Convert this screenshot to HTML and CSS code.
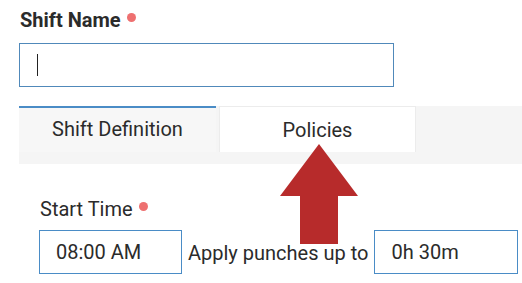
FILE: index.html
```html
<!DOCTYPE html>
<html>
<head>
<meta charset="utf-8">
<link rel="stylesheet" href="styles.css">
</head>
<body>
<div class="page">
  <div class="field-label bold">Shift Name<span class="req"></span></div>
  <div class="name-input"><span class="caret"></span></div>
  <div class="tabs">
    <div class="tab active">Shift Definition</div>
    <div class="tab plain">Policies</div>
  </div>
  <div class="content">
    <div class="field-label">Start Time<span class="req"></span></div>
    <div class="row">
      <div class="box">08:00 AM</div>
      <span class="inline-text">Apply punches up to</span>
      <div class="box wide">0h 30m</div>
    </div>
  </div>
  <svg class="arrow" width="80" height="102" viewBox="0 0 80 102">
    <polygon points="39,0 78,52 58,52 58,100 20,100 20,52 0,52" fill="#b72b2b"/>
  </svg>
</div>
</body>
</html>
```
FILE: styles.css
```css
html, body { margin: 0; padding: 0; background: #fff; }
body { font-family: Roboto, "Noto Sans", sans-serif; color: #2b2b2b; }
.page { position: relative; width: 522px; height: 283px; overflow: hidden; padding-top: 8px; box-sizing: border-box; }
.field-label { font-size: 20px; line-height: 24px; margin-left: 20px; display: flex; align-items: flex-start; }
.bold { font-weight: 700; }
.req { width: 9px; height: 9px; border-radius: 50%; background: #ee7070; margin-left: 6px; margin-top: 5px; }
.name-input { margin: 11px 0 0 19px; width: 375px; height: 44px; border: 1px solid #5089ba; box-sizing: border-box; display: flex; align-items: center; }
.caret { width: 1px; height: 22px; background: #222; margin-left: 17px; }
.tabs { margin: 19px 0 0 19px; height: 58px; background: #f5f5f5; display: flex; align-items: flex-start; }
.tab { width: 197px; height: 46px; box-sizing: border-box; font-size: 20px; display: flex; justify-content: center; align-items: center; }
.tab.active { border-top: 2px solid #4a8cc6; background: #f7f7f7; padding-bottom: 2px; }
.tab.plain { margin-left: 3px; background: #fff; border: 1px solid #ececec; border-bottom: none; }
.content { padding: 33px 0 0 39px; }
.content .field-label { margin-left: 1px; }
.row { display: flex; align-items: center; margin-top: 9px; }
.box { width: 143px; height: 44px; border: 1px solid #4a8cc6; box-sizing: border-box; font-size: 20px; display: flex; align-items: center; padding-left: 16px; }
.box.wide { width: 144px; }
.inline-text { font-size: 20px; margin: 2px 6px 0 6px; }
.arrow { position: absolute; left: 280px; top: 144px; }
```
